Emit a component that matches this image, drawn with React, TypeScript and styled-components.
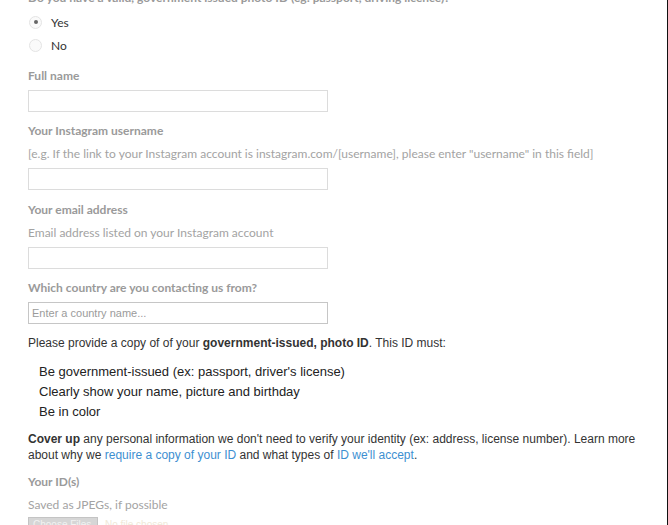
import React from "react";
import styled, { createGlobalStyle } from "styled-components";

const Global = createGlobalStyle`
  html, body { margin: 0; padding: 0; background: #fff; }
  body { overflow: hidden; }
`;

const Page = styled.div`
  width: 667px;
  height: 525px;
  border-right: 1px solid #111;
  overflow: hidden;
  box-sizing: content-box;
`;

const Form = styled.div`
  margin-top: -9px;
  padding-left: 28px;
  display: flex;
  flex-direction: column;
`;

const Label = styled.div<{ $mt?: number }>`
  font-family: Lato, "Open Sans", sans-serif;
  font-weight: 700;
  font-size: 12px;
  line-height: 14px;
  color: #9a9a9a;
  margin-top: ${(p) => p.$mt ?? 0}px;
`;

const Help = styled.div`
  font-family: Lato, "Open Sans", sans-serif;
  font-size: 12px;
  line-height: 14px;
  color: #a3a3a3;
  margin-top: 9px;
`;

const RadioGroup = styled.div`
  display: flex;
  flex-direction: column;
  gap: 7px;
  margin-top: 9px;
`;

const RadioRow = styled.label`
  display: flex;
  align-items: center;
  gap: 9px;
  height: 16px;
  padding-left: 1px;
  font-family: Lato, "Open Sans", sans-serif;
  font-size: 12px;
  color: #333;
`;

const RadioDot = styled.span<{ $on?: boolean }>`
  width: 11px;
  height: 11px;
  border-radius: 50%;
  border: 1px solid #e4e4e4;
  background: #fafafa;
  display: flex;
  align-items: center;
  justify-content: center;
  &::after {
    content: "";
    width: 4px;
    height: 4px;
    border-radius: 50%;
    background: ${(p) => (p.$on ? "#666" : "transparent")};
  }
`;

const Input = styled.div<{ $dark?: boolean }>`
  width: 295px;
  height: 20px;
  margin-top: 7px;
  border: 1px solid ${(p) => (p.$dark ? "#c6c6c6" : "#dcdcdc")};
  background: #fff;
  display: flex;
  align-items: center;
  padding-left: 3px;
  box-sizing: content-box;
  font-family: "Liberation Sans", Arial, sans-serif;
  font-size: 11px;
  color: #9b9b9b;
`;

const Body = styled.div<{ $mt?: number }>`
  font-family: "Liberation Sans", Arial, sans-serif;
  font-size: 12px;
  line-height: 16px;
  color: #333;
  margin-top: ${(p) => p.$mt ?? 0}px;
  max-width: 625px;
  b { font-weight: 700; }
`;

const List = styled.ul`
  list-style: none;
  margin: 11px 0 0;
  padding: 0 0 0 11px;
  display: flex;
  flex-direction: column;
  font-family: "Liberation Sans", Arial, sans-serif;
  font-size: 13px;
  line-height: 20px;
  color: #222;
`;

const Link = styled.a`
  color: #3d8fd1;
  text-decoration: none;
`;

const FileRow = styled.div`
  display: flex;
  align-items: center;
  gap: 7px;
  margin-top: 5px;
`;

const FileButton = styled.span`
  width: 70px;
  height: 18px;
  background: #d6d6d6;
  border: 1px solid #c4c4c4;
  box-sizing: border-box;
  font-family: "Liberation Sans", Arial, sans-serif;
  font-size: 10px;
  color: #f2f2f2;
  padding: 1px 4px;
`;

const FileName = styled.span`
  font-family: "Liberation Sans", Arial, sans-serif;
  font-size: 10px;
  color: #efe9d8;
  align-self: flex-start;
  margin-top: 2px;
`;

export default function App() {
  return (
    <Page>
      <Global />
      <Form>
        <Label>Do you have a valid, government issued photo ID (eg: passport, driving licence)?</Label>
        <RadioGroup>
          <RadioRow>
            <RadioDot $on />
            Yes
          </RadioRow>
          <RadioRow>
            <RadioDot />
            No
          </RadioRow>
        </RadioGroup>

        <Label $mt={16}>Full name</Label>
        <Input />

        <Label $mt={12}>Your Instagram username</Label>
        <Help>[e.g. If the link to your Instagram account is instagram.com/[username], please enter "username" in this field]</Help>
        <Input />

        <Label $mt={13}>Your email address</Label>
        <Help>Email address listed on your Instagram account</Help>
        <Input />

        <Label $mt={12}>Which country are you contacting us from?</Label>
        <Input $dark>Enter a country name...</Input>

        <Body $mt={11}>
          Please provide a copy of of your <b>government-issued, photo ID</b>. This ID must:
        </Body>
        <List>
          <li>Be government-issued (ex: passport, driver's license)</li>
          <li>Clearly show your name, picture and birthday</li>
          <li>Be in color</li>
        </List>

        <Body $mt={9}>
          <b>Cover up</b> any personal information we don't need to verify your identity (ex: address, license number). Learn more about why we{" "}
          <Link>require a copy of your ID</Link> and what types of <Link>ID we'll accept</Link>.
        </Body>

        <Label $mt={12}>Your ID(s)</Label>
        <Help>Saved as JPEGs, if possible</Help>
        <FileRow>
          <FileButton>Choose Files</FileButton>
          <FileName>No file chosen</FileName>
        </FileRow>
      </Form>
    </Page>
  );
}
